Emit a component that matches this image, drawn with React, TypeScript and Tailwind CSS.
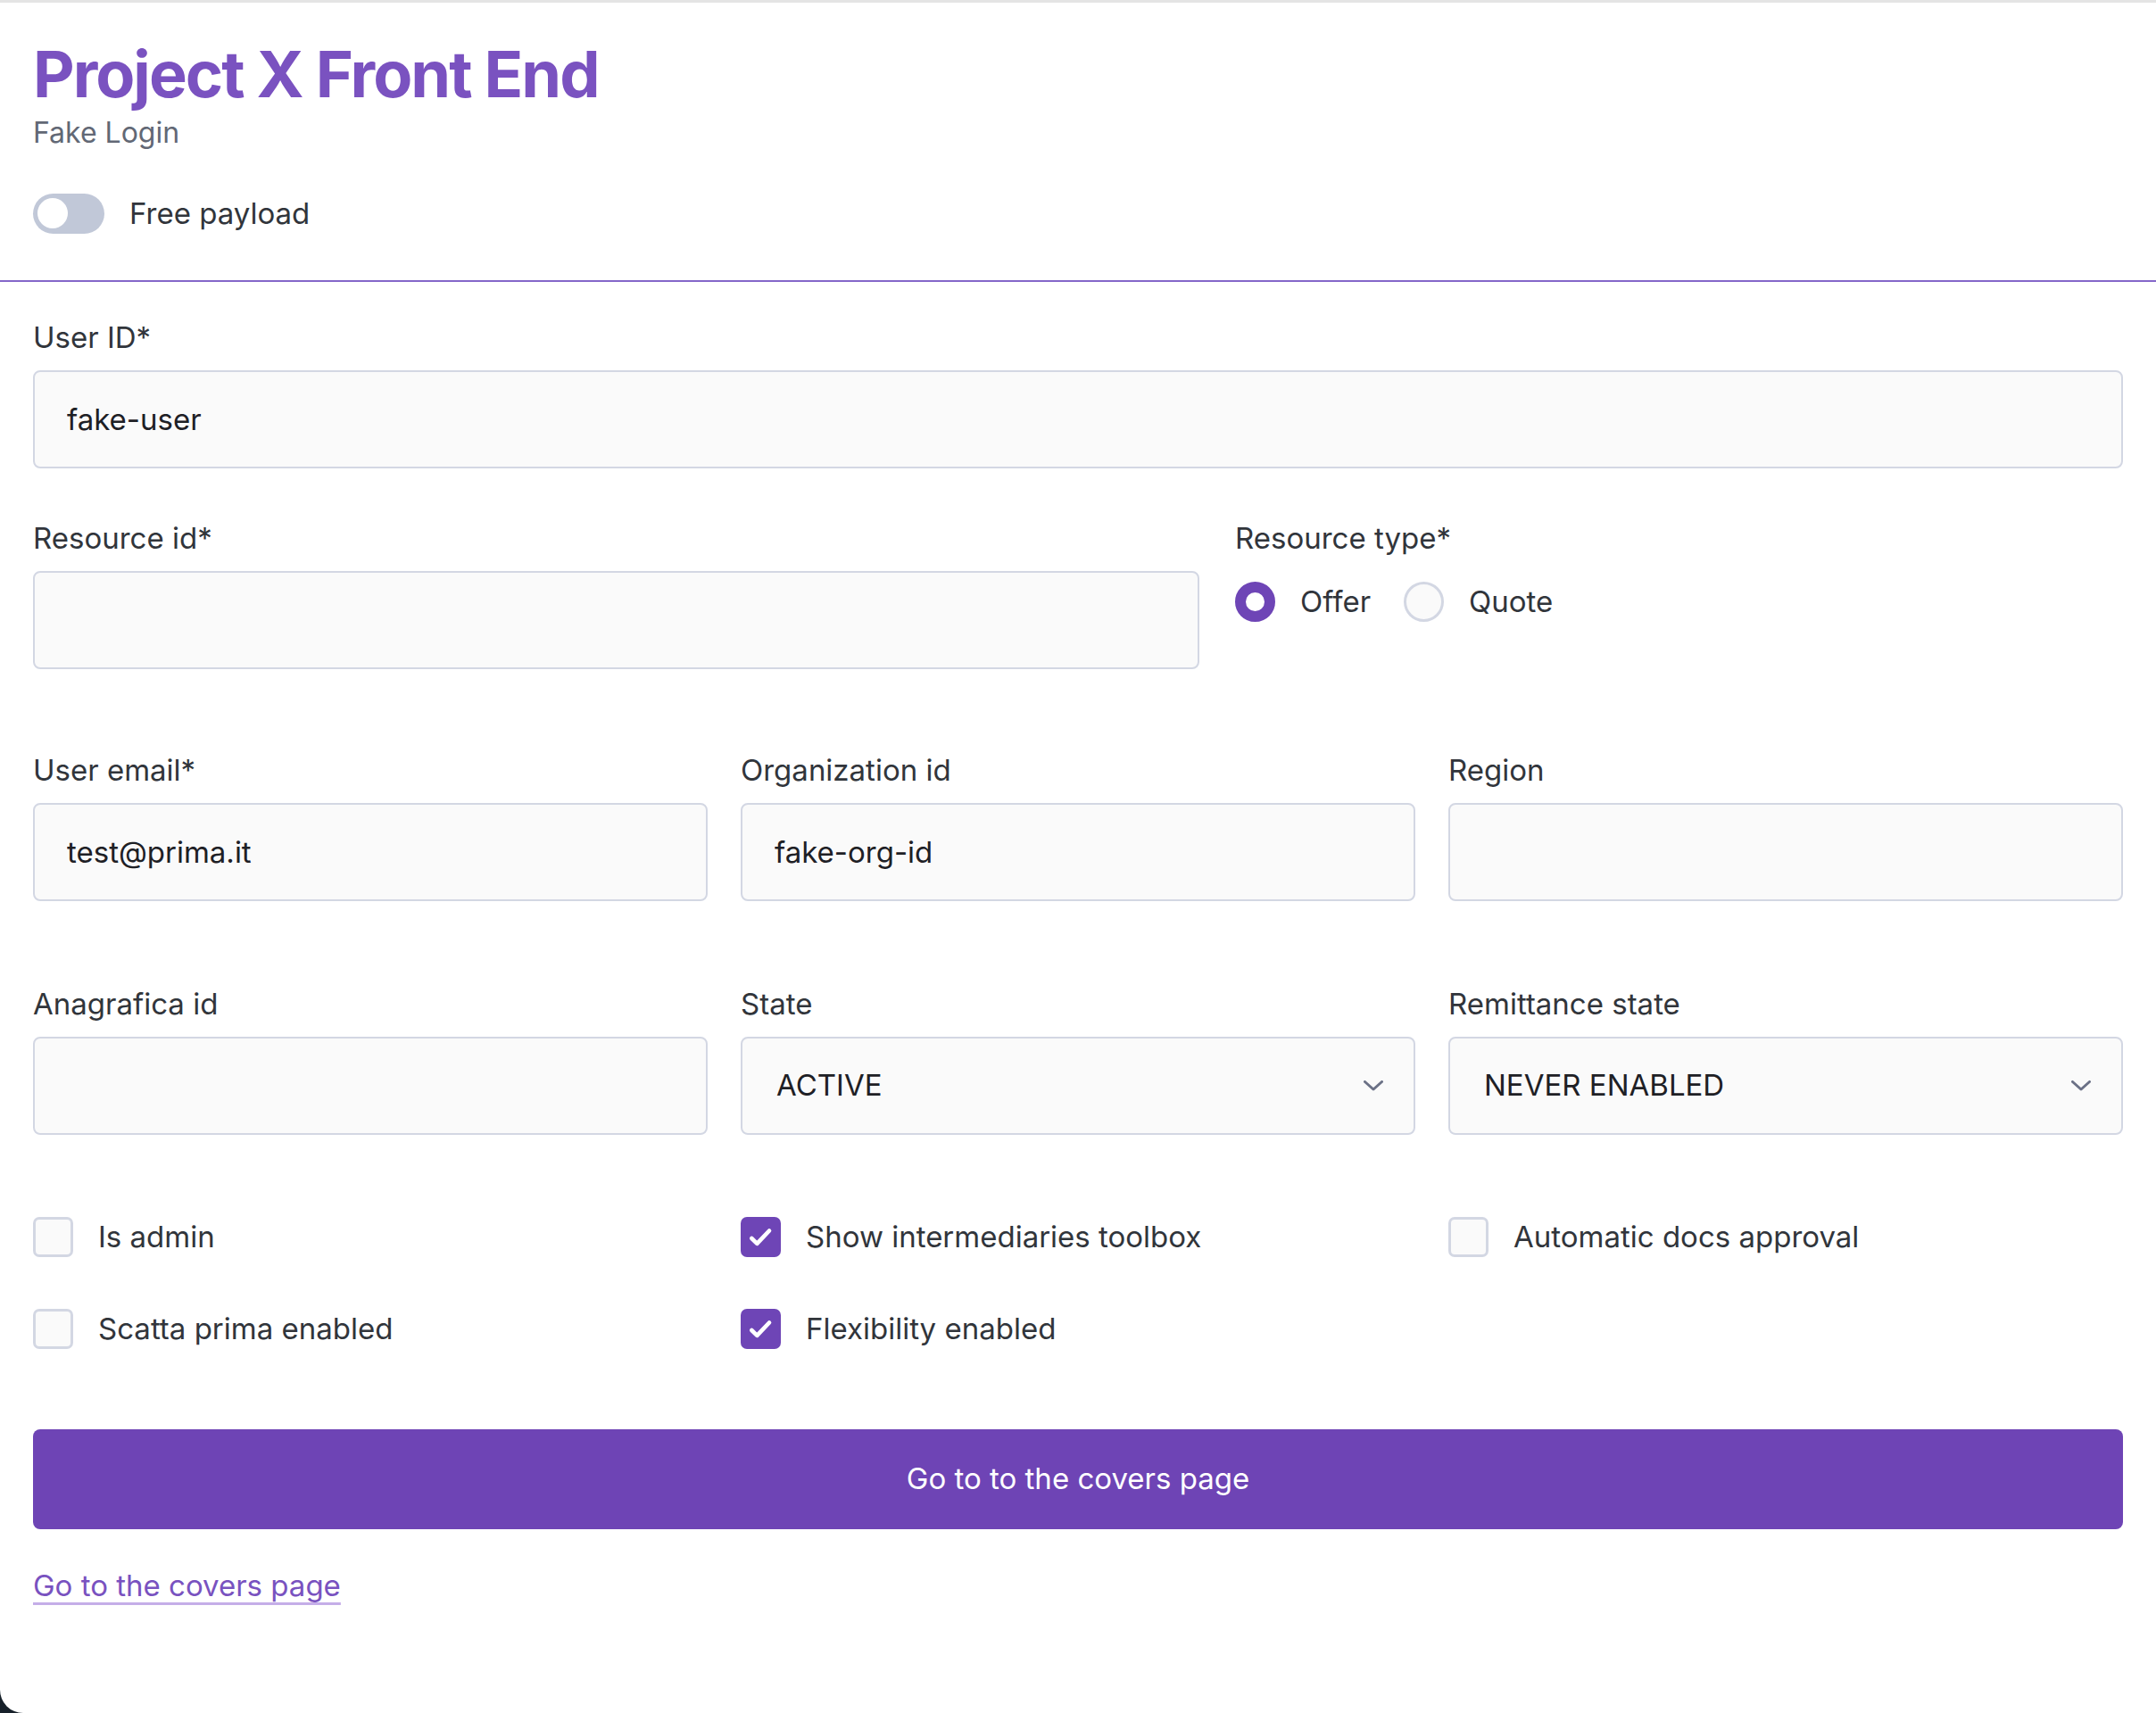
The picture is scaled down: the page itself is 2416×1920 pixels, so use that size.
import React, { useState } from 'react';

const Label: React.FC<{ children: React.ReactNode }> = ({ children }) => (
  <div className="text-[33px] leading-[51px] text-[#31353b] mb-[11px]">{children}</div>
);

const TextInput: React.FC<{ value?: string }> = ({ value = '' }) => (
  <input
    readOnly
    value={value}
    className="block h-[110px] w-full rounded-[8px] border-2 border-[#d3d7e3] bg-[#fafafa] px-[36px] text-[33px] text-[#1e2025] outline-none"
  />
);

const FakeSelect: React.FC<{ value: string }> = ({ value }) => (
  <div className="flex h-[110px] w-full items-center justify-between rounded-[8px] border-2 border-[#d3d7e3] bg-[#fafafa] pl-[38px] pr-[34px] text-[33px] text-[#1e2025]">
    <span>{value}</span>
    <svg width="22" height="12" viewBox="0 0 22 12" fill="none">
      <polyline points="1.5,1.5 11,10 20.5,1.5" stroke="#6b7186" strokeWidth="3" strokeLinecap="round" strokeLinejoin="round" />
    </svg>
  </div>
);

const Checkbox: React.FC<{ checked?: boolean; label: string }> = ({ checked = false, label }) => (
  <div className="flex h-[51px] items-center gap-[28px]">
    {checked ? (
      <div className="flex h-[45px] w-[45px] items-center justify-center rounded-[7px] bg-[#6e45b6]">
        <svg width="40" height="40" viewBox="0 0 24 24" fill="none">
          <path d="M5.6 12.6l3.6 3.5 8.2-8.6" stroke="#ffffff" strokeWidth="2.8" strokeLinecap="round" strokeLinejoin="round" />
        </svg>
      </div>
    ) : (
      <div className="h-[45px] w-[45px] rounded-[7px] border-[3px] border-[#d3d7e3] bg-[#fafafa]" />
    )}
    <span className="text-[33px] leading-[51px] text-[#31353b]">{label}</span>
  </div>
);

export default function App() {
  const [resourceType] = useState<'offer' | 'quote'>('offer');

  return (
    <div className="h-[1920px] bg-[#17212a] font-['Inter',_sans-serif]">
      <div className="h-full overflow-hidden rounded-bl-[26px] border-t-[3px] border-[#e4e4e4] bg-white">
        {/* Header */}
        <header className="border-b-2 border-[#8467c9] pl-[37px] pt-[44px] pb-[48px]">
          <h1 className="text-[72px] font-bold leading-[72px] tracking-[-2px] text-[#7a52c0]">Project X Front End</h1>
          <p className="mt-[6px] text-[32px] leading-[48px] text-[#626875]">Fake Login</p>
          <div className="mt-[39px] flex items-center gap-[28px]">
            <div className="flex h-[45px] w-[80px] items-center rounded-full bg-[#c1c8d8] pl-[5px]">
              <div className="h-[34px] w-[34px] rounded-full bg-white" />
            </div>
            <span className="text-[33px] leading-[54px] text-[#31353b]">Free payload</span>
          </div>
        </header>

        {/* Form */}
        <div className="px-[37px] pt-[37px]">
          <Label>User ID*</Label>
          <TextInput value="fake-user" />

          <div className="mt-[53px] grid grid-cols-[1307px_1fr] gap-x-[40px]">
            <div>
              <Label>Resource id*</Label>
              <TextInput />
            </div>
            <div>
              <div className="text-[33px] leading-[51px] text-[#31353b]">Resource type*</div>
              <div className="mt-[20px] flex h-[51px] items-center text-[33px] text-[#31353b]">
                <div
                  className={
                    resourceType === 'offer'
                      ? 'h-[45px] w-[45px] rounded-full border-[12px] border-[#6e45b6] bg-white'
                      : 'h-[45px] w-[45px] rounded-full border-[3px] border-[#d3d7e3] bg-[#fafafa]'
                  }
                />
                <span className="ml-[28px]">Offer</span>
                <div className="ml-[37px] h-[45px] w-[45px] rounded-full border-[3px] border-[#d3d7e3] bg-[#fafafa]" />
                <span className="ml-[28px]">Quote</span>
              </div>
            </div>
          </div>

          <div className="mt-[88px] grid grid-cols-3 gap-x-[37px]">
            <div>
              <Label>User email*</Label>
              <TextInput value="test@prima.it" />
            </div>
            <div>
              <Label>Organization id</Label>
              <TextInput value="fake-org-id" />
            </div>
            <div>
              <Label>Region</Label>
              <TextInput />
            </div>
          </div>

          <div className="mt-[90px] grid grid-cols-3 gap-x-[37px]">
            <div>
              <Label>Anagrafica id</Label>
              <TextInput />
            </div>
            <div>
              <Label>State</Label>
              <FakeSelect value="ACTIVE" />
            </div>
            <div>
              <Label>Remittance state</Label>
              <FakeSelect value="NEVER ENABLED" />
            </div>
          </div>

          <div className="mt-[89px] grid grid-cols-3 gap-x-[37px] gap-y-[52px]">
            <Checkbox label="Is admin" />
            <Checkbox checked label="Show intermediaries toolbox" />
            <Checkbox label="Automatic docs approval" />
            <Checkbox label="Scatta prima enabled" />
            <Checkbox checked label="Flexibility enabled" />
          </div>

          <button className="mt-[87px] flex h-[112px] w-full items-center justify-center rounded-[8px] bg-[#6e44b5] text-[33px] text-white">
            Go to to the covers page
          </button>

          <div className="mt-[38px]">
            <a
              href="#"
              className="text-[33px] leading-[51px] text-[#7952c0] underline decoration-[#c5aee8] decoration-[3px] underline-offset-[7px]"
            >
              Go to the covers page
            </a>
          </div>
        </div>
      </div>
    </div>
  );
}
